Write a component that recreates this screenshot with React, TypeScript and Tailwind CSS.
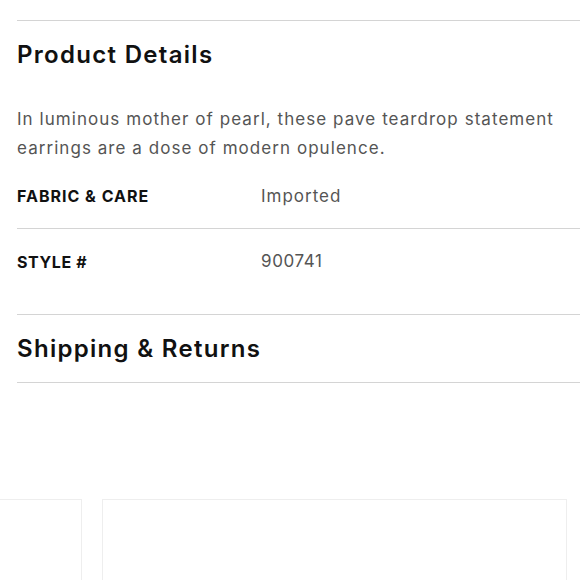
export default function App() {
  const font = { fontFamily: "Inter, 'Noto Sans', sans-serif" };
  return (
    <div className="w-[580px] h-[580px] overflow-hidden bg-white" style={font}>
      <div className="pl-[17px]">
        <div className="border-t border-[#d4d4d4] mt-[20px]" />
        <h2 className="text-[24px] font-semibold text-[#111] leading-none tracking-[1.3px] pt-[22px] pb-[38px]">Product Details</h2>
        <p className="text-[17px] leading-[29px] text-[#555] tracking-[1.05px] pr-[10px]">
          In luminous mother of pearl, these pave teardrop statement earrings are a dose of modern opulence.
        </p>
        <div className="flex items-center h-[66px] text-[16px] border-b border-[#d4d4d4]">
          <div className="w-[244px] font-bold text-[#111] uppercase tracking-[1px]">Fabric &amp; Care</div>
          <div className="text-[#555] text-[17px] tracking-[1px] pt-[2px]">Imported</div>
        </div>
        <div className="flex items-center h-[66px] text-[16px]">
          <div className="w-[244px] font-bold text-[#111] uppercase tracking-[0.6px]">Style #</div>
          <div className="text-[#555] text-[17px] tracking-[0.6px]">900741</div>
        </div>
        <div className="border-t border-[#d4d4d4] mt-[19px]" />
        <h2 className="text-[24px] font-semibold text-[#111] tracking-[1.3px] h-[67px] flex items-center">Shipping &amp; Returns</h2>
        <div className="border-t border-[#d4d4d4]" />
      </div>
      <div className="flex gap-[20px] mt-[116px] ml-[-300px]">
        <div className="w-[382px] h-[100px] border border-[#eeeeee] shrink-0" />
        <div className="w-[465px] h-[100px] border border-[#eeeeee] shrink-0" />
      </div>
    </div>
  );
}
